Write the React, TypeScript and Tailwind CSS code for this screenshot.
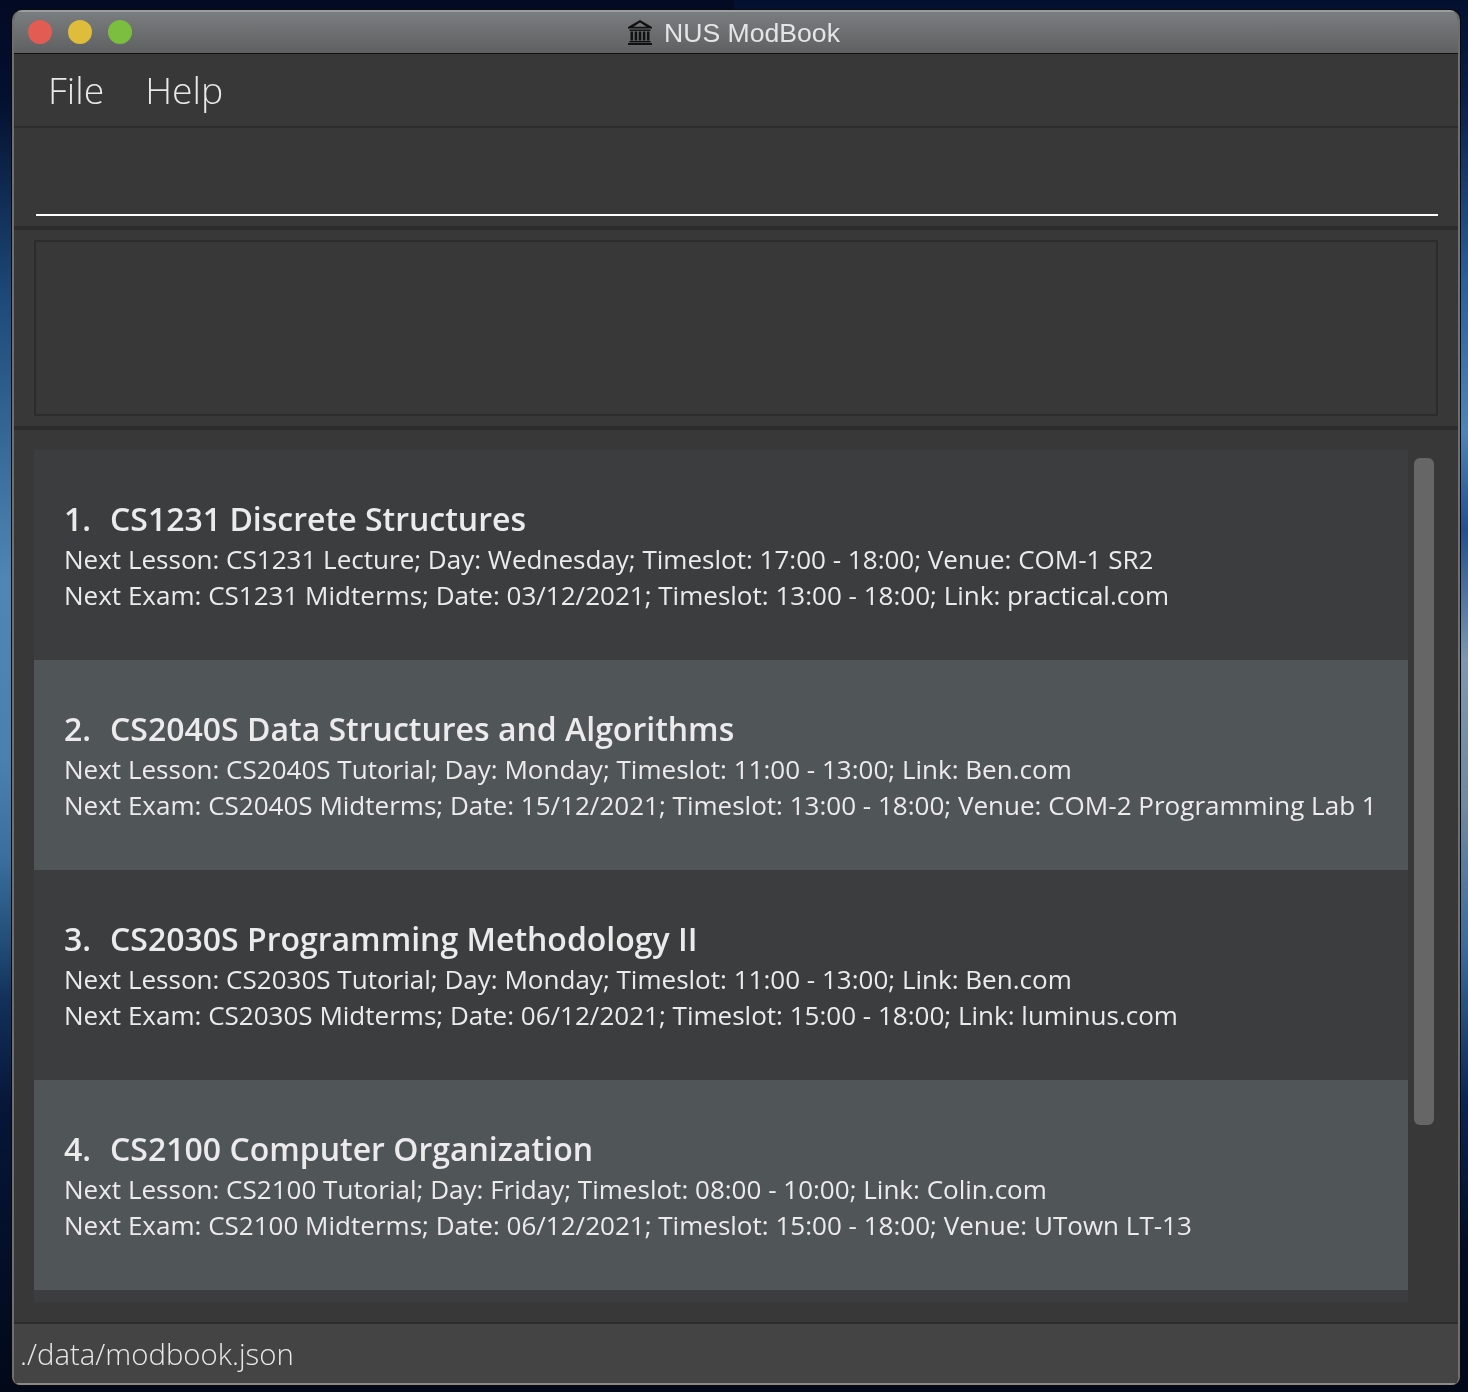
const font = { fontFamily: '"Open Sans", "Noto Sans", sans-serif' };

const mods = [
  {
    n: "1.",
    title: "CS1231 Discrete Structures",
    a: "Next Lesson: CS1231 Lecture; Day: Wednesday; Timeslot: 17:00 - 18:00; Venue: COM-1 SR2",
    b: "Next Exam: CS1231 Midterms; Date: 03/12/2021; Timeslot: 13:00 - 18:00; Link: practical.com",
  },
  {
    n: "2.",
    title: "CS2040S Data Structures and Algorithms",
    a: "Next Lesson: CS2040S Tutorial; Day: Monday; Timeslot: 11:00 - 13:00; Link: Ben.com",
    b: "Next Exam: CS2040S Midterms; Date: 15/12/2021; Timeslot: 13:00 - 18:00; Venue: COM-2 Programming Lab 1",
  },
  {
    n: "3.",
    title: "CS2030S Programming Methodology II",
    a: "Next Lesson: CS2030S Tutorial; Day: Monday; Timeslot: 11:00 - 13:00; Link: Ben.com",
    b: "Next Exam: CS2030S Midterms; Date: 06/12/2021; Timeslot: 15:00 - 18:00; Link: luminus.com",
  },
  {
    n: "4.",
    title: "CS2100 Computer Organization",
    a: "Next Lesson: CS2100 Tutorial; Day: Friday; Timeslot: 08:00 - 10:00; Link: Colin.com",
    b: "Next Exam: CS2100 Midterms; Date: 06/12/2021; Timeslot: 15:00 - 18:00; Venue: UTown LT-13",
  },
];

function Bank() {
  return (
    <svg width="26" height="27" viewBox="0 0 26 27" fill="#111">
      <path d="M13 1 L25 8 V9.5 H1 V8 Z M13 3.6 L6.5 7.8 H19.5 Z" fillRule="evenodd" />
      <rect x="2.5" y="10.5" width="21" height="1.4" />
      <rect x="3.5" y="12.5" width="2.6" height="9" />
      <rect x="7.6" y="12.5" width="2.6" height="9" />
      <rect x="11.7" y="12.5" width="2.6" height="9" />
      <rect x="15.8" y="12.5" width="2.6" height="9" />
      <rect x="19.9" y="12.5" width="2.6" height="9" />
      <rect x="2.5" y="22" width="21" height="1.4" />
      <rect x="1" y="24" width="24" height="2" />
    </svg>
  );
}

export default function App() {
  return (
    <div className="w-[1468px] h-[1392px] overflow-hidden pt-[10px] pl-[12px]" style={font}>
      <div className="fixed inset-y-0 left-0 w-[734px] -z-10 bg-[linear-gradient(to_bottom,#030a24_0px,#041030_100px,#1d4a7a_300px,#4f86b5_580px,#4a80b0_760px,#3a6e9e_860px,#1f4a74_950px,#12305a_1000px,#061538_1110px,#020818_1392px)]" />
      <div className="fixed inset-y-0 right-0 w-[734px] -z-10 bg-[linear-gradient(to_bottom,#041030_0px,#0a1f48_100px,#2a5f98_280px,#4f85b5_430px,#24508c_530px,#7d98b0_660px,#7088a0_810px,#3b6a9a_950px,#0a2552_1100px,#030c26_1250px,#020818_1392px)]" />
      <div className="w-[1448px] h-[1375px] rounded-t-[10px] rounded-b-[8px] overflow-hidden flex flex-col bg-[#383838] border-x-2 border-[#6f6f6f] shadow-[0_0_0_1px_#0a0a0a]">
        <div className="relative h-[43px] shrink-0 flex items-center justify-center border-t-2 border-[#9a9c9e] bg-[linear-gradient(to_bottom,#7a7d7f_0%,#5f6062_100%)]">
          <div className="absolute left-[14px] top-[8px] flex gap-[16px]">
            <div className="w-[24px] h-[24px] rounded-full bg-[#e25c54]" />
            <div className="w-[24px] h-[24px] rounded-full bg-[#dfbc3a]" />
            <div className="w-[24px] h-[24px] rounded-full bg-[#7cbf3f]" />
          </div>
          <div className="flex items-center gap-[11px] mr-[5px]">
            <Bank />
            <span
              className="text-[26.6px] leading-[32px] text-[#e3e5e7]"
              style={{ fontFamily: '"Liberation Sans", Arial, sans-serif' }}
            >
              NUS ModBook
            </span>
          </div>
        </div>
        <div className="h-[1px] shrink-0 bg-[#111111]" />
        <div className="h-[72px] shrink-0 flex items-center pl-[34px] gap-[41px] text-[37.33px] font-light text-[#e8e8e8] bg-[#383838]">
          <span>File</span>
          <span>Help</span>
        </div>
        <div className="h-[2px] shrink-0 bg-[#2c2c2c]" />
        <div className="h-[98px] shrink-0 pl-[22px] pt-[86px] bg-[#383838]">
          <div className="h-[2px] bg-white w-[1402px]" />
        </div>
        <div className="h-[4px] shrink-0 bg-[#2c2c2c]" />
        <div className="h-[196px] shrink-0 pl-[20px] py-[10px]">
          <div className="w-[1404px] h-[176px] border-2 border-[#2c2c2c]" />
        </div>
        <div className="h-[4px] shrink-0 bg-[#2c2c2c]" />
        <div className="h-[892px] shrink-0 flex pl-[20px] pt-[20px] pb-[20px]">
          <div className="w-[1374px] h-[852px] bg-[#3c3d3f]">
            {mods.map((m, i) => (
              <div
                key={m.n}
                className={`h-[210px] pl-[30px] pt-[47px] ${i % 2 ? "bg-[#505558]" : "bg-[#3c3d3f]"}`}
              >
                <div className="flex text-[32px] leading-[44px] font-semibold text-[#ebebeb]">
                  <span className="w-[46px]">{m.n}</span>
                  <span>{m.title}</span>
                </div>
                <div className="text-[26.04px] leading-[36px] text-[#ebebeb] whitespace-nowrap">{m.a}</div>
                <div className="text-[26.04px] leading-[36px] text-[#ebebeb] whitespace-nowrap">{m.b}</div>
              </div>
            ))}
          </div>
          <div className="ml-[6px] mt-[8px] w-[20px] h-[667px] rounded-[6px] bg-[#666666]" />
        </div>
        <div className="h-[2px] shrink-0 bg-[#2c2c2c]" />
        <div className="flex-1 flex items-center pl-[6px] pt-[2px] text-[29.33px] font-light text-[#e8e8e8] bg-[#444444] border-b-2 border-[#8a8a8a]">
          ./data/modbook.json
        </div>
      </div>
    </div>
  );
}
